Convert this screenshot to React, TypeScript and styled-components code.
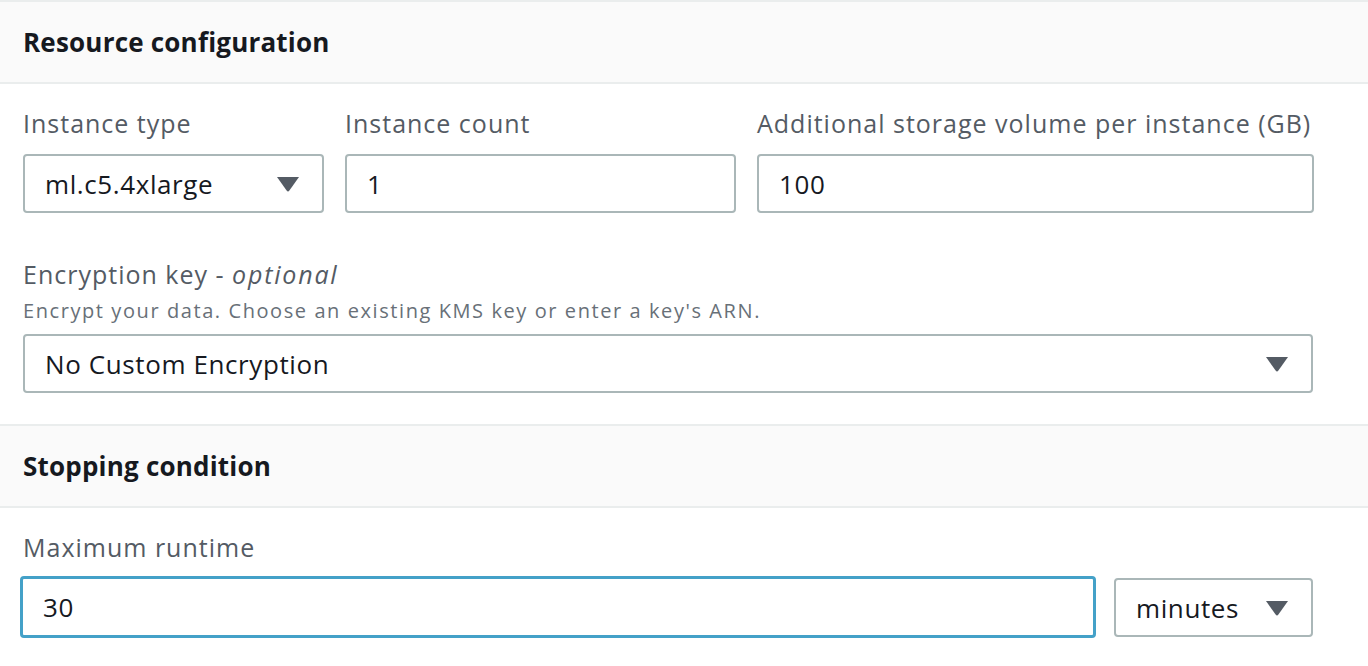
import React from 'react';
import styled, { createGlobalStyle } from 'styled-components';

const FONT = '"Open Sans", "Noto Sans", sans-serif';

const GlobalStyle = createGlobalStyle`
  html, body {
    margin: 0;
    padding: 0;
    background: #ffffff;
  }
  body {
    font-family: ${FONT};
    color: #16191f;
  }
`;

const Page = styled.div`
  width: 1368px;
  height: 666px;
  overflow: hidden;
`;

const SectionHeader = styled.div`
  box-sizing: border-box;
  height: 84px;
  display: flex;
  align-items: center;
  padding: 0 23px;
  background: #fafafa;
  border-top: 2px solid #eaeded;
  border-bottom: 2px solid #eaeded;
`;

const Title = styled.h2`
  margin: 0;
  font-size: 26px;
  font-weight: 700;
  letter-spacing: 0.2px;
  color: #16191f;
`;

const SectionBody = styled.div<{ $top: number; $bottom: number }>`
  padding: ${({ $top }) => $top}px 55px ${({ $bottom }) => $bottom}px 23px;
  display: flex;
  flex-direction: column;
`;

const Row = styled.div<{ $gap?: number }>`
  display: flex;
  gap: ${({ $gap }) => $gap ?? 21}px;
  align-items: flex-end;
`;

const Field = styled.div<{ $width?: number; $grow?: boolean }>`
  display: flex;
  flex-direction: column;
  width: ${({ $width }) => ($width ? `${$width}px` : 'auto')};
  flex: ${({ $grow }) => ($grow ? '1 1 auto' : '0 0 auto')};
`;

const Label = styled.label`
  font-size: 25px;
  line-height: 30px;
  color: #545b64;
  letter-spacing: 1px;
  margin-bottom: 16px;
  white-space: nowrap;

  em {
    font-style: italic;
    letter-spacing: 1.8px;
  }
`;

const Description = styled.div`
  font-size: 20px;
  line-height: 26px;
  color: #687078;
  letter-spacing: 1.58px;
  margin-top: -7px;
  margin-bottom: 10px;
  white-space: nowrap;
`;

const Control = styled.div<{ $focus?: boolean }>`
  box-sizing: border-box;
  height: ${({ $focus }) => ($focus ? 62 : 59)}px;
  margin: ${({ $focus }) => ($focus ? '-2px -2px -1px -3px' : '0')};
  display: flex;
  align-items: center;
  justify-content: space-between;
  padding: 0 ${({ $focus }) => ($focus ? 20 : 22)}px 0 20px;
  border: ${({ $focus }) => ($focus ? '3px solid #44a1c8' : '2px solid #aab7b8')};
  border-radius: 4px;
  background: #ffffff;
  font-size: 26px;
  color: #16191f;
  letter-spacing: 0.6px;
  white-space: nowrap;
`;

const Caret = () => (
  <svg width="24" height="16" viewBox="0 0 24 16" aria-hidden>
    <path d="M1 1 H23 L13.4 14.6 Q12 16.4 10.6 14.6 Z" fill="#545b64" />
  </svg>
);

const Spacer = styled.div<{ $h: number }>`
  height: ${({ $h }) => $h}px;
`;

export default function App() {
  return (
    <Page>
      <GlobalStyle />
      <SectionHeader>
        <Title>Resource configuration</Title>
      </SectionHeader>
      <SectionBody $top={24} $bottom={31}>
        <Row>
          <Field $width={301}>
            <Label>Instance type</Label>
            <Control>
              ml.c5.4xlarge
              <Caret />
            </Control>
          </Field>
          <Field $width={391}>
            <Label>Instance count</Label>
            <Control>1</Control>
          </Field>
          <Field $width={557}>
            <Label>Additional storage volume per instance (GB)</Label>
            <Control>100</Control>
          </Field>
        </Row>
        <Spacer $h={46} />
        <Field>
          <Label>
            Encryption key - <em>optional</em>
          </Label>
          <Description>Encrypt your data. Choose an existing KMS key or enter a key's ARN.</Description>
          <Control>
            No Custom Encryption
            <Caret />
          </Control>
        </Field>
      </SectionBody>
      <SectionHeader>
        <Title>Stopping condition</Title>
      </SectionHeader>
      <SectionBody $top={24} $bottom={0}>
        <Field>
          <Label>Maximum runtime</Label>
          <Row $gap={20}>
            <Field $grow>
              <Control $focus>30</Control>
            </Field>
            <Field $width={199}>
              <Control>
                minutes
                <Caret />
              </Control>
            </Field>
          </Row>
        </Field>
      </SectionBody>
    </Page>
  );
}
